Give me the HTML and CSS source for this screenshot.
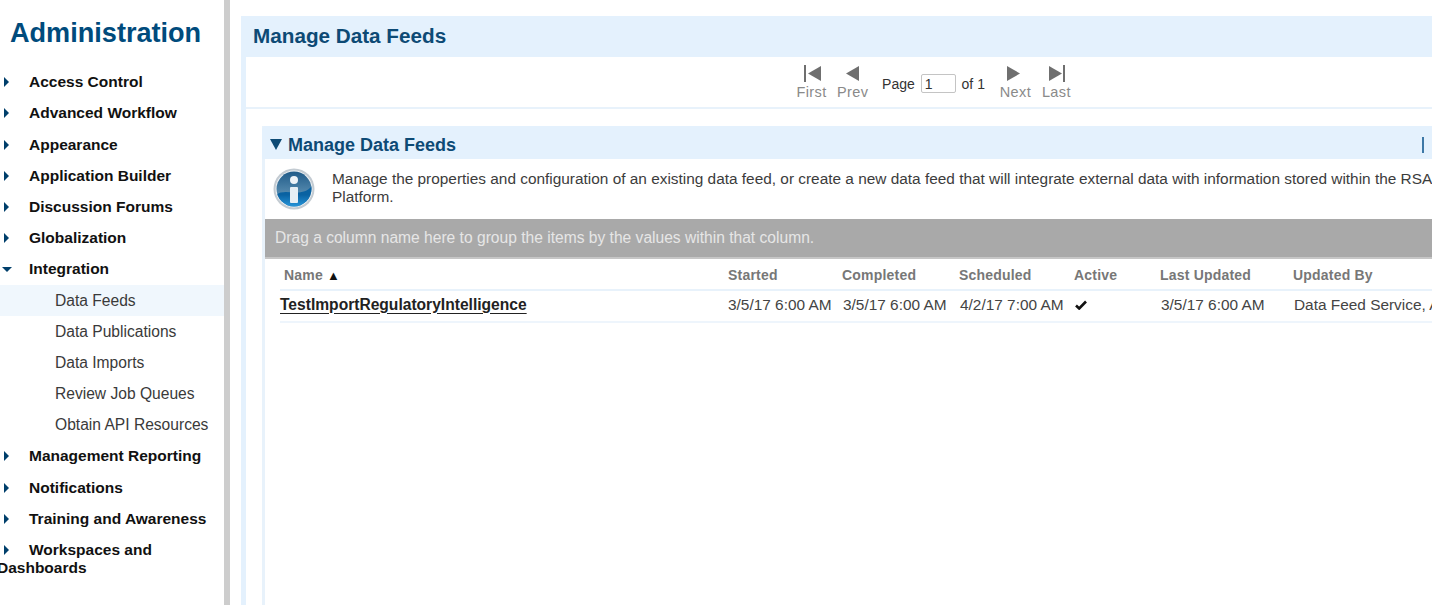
FILE: index.html
```html
<!DOCTYPE html>
<html>
  <head>
    <meta charset="utf-8" />
    <title>Manage Data Feeds</title>
    <link rel="stylesheet" href="styles.css">
  </head>
  <body>
    <div class="sidebar">
      <h1>Administration</h1>
      <ul class="menu">
        <li class="menu-item"><span class="arrow"></span>Access Control</li>
        <li class="menu-item"><span class="arrow"></span>Advanced Workflow</li>
        <li class="menu-item"><span class="arrow"></span>Appearance</li>
        <li class="menu-item"><span class="arrow"></span>Application Builder</li>
        <li class="menu-item"><span class="arrow"></span>Discussion Forums</li>
        <li class="menu-item"><span class="arrow"></span>Globalization</li>
        <li class="menu-item"><span class="arrow open"></span>Integration</li>
        <li class="sub-item selected">Data Feeds</li>
        <li class="sub-item">Data Publications</li>
        <li class="sub-item">Data Imports</li>
        <li class="sub-item">Review Job Queues</li>
        <li class="sub-item">Obtain API Resources</li>
        <li class="menu-item"><span class="arrow"></span>Management Reporting</li>
        <li class="menu-item"><span class="arrow"></span>Notifications</li>
        <li class="menu-item"><span class="arrow"></span>Training and Awareness</li>
        <li class="menu-item"><span class="arrow"></span>Workspaces and Dashboards</li>
      </ul>
    </div>

    <div class="divider"></div>

    <div class="main">
      <div class="page-frame">
        <h2 class="page-title">Manage Data Feeds</h2>
        <div class="page-body">
          <div class="pager">
            <div class="pager-btn">
              <svg class="icon-first" width="18" height="18" viewBox="0 0 18 18"><rect x="0" y="0" width="2" height="17" fill="#6f6f6f"/><path d="M17 1v15L4 8.500z" fill="#6f6f6f"/></svg>
              <span>First</span>
            </div>
            <div class="pager-btn">
              <svg width="13" height="18" viewBox="0 0 13 18"><path d="M13 1v15L0 8.500z" fill="#6f6f6f"/></svg>
              <span>Prev</span>
            </div>
            <div class="pager-page">
              Page <input class="page-input" type="text" value="1" /> of 1
            </div>
            <div class="pager-btn">
              <svg class="icon-next" width="13" height="18" viewBox="0 0 13 18"><path d="M0 1v15l13-7.500z" fill="#6f6f6f"/></svg>
              <span>Next</span>
            </div>
            <div class="pager-btn">
              <svg class="icon-last" width="18" height="18" viewBox="0 0 18 18"><path d="M0 1v15l13-7.500z" fill="#6f6f6f"/><rect x="14" y="0" width="2" height="17" fill="#6f6f6f"/></svg>
              <span>Last</span>
            </div>
          </div>

          <div class="panel">
            <div class="panel-head">
              <span class="panel-title"><span class="caret"></span>Manage Data Feeds</span>
              <span class="panel-tool"></span>
            </div>
            <div class="panel-body">
              <div class="intro">
                <svg class="info-icon" width="42" height="42" viewBox="0 0 42 42">
                  <defs>
                    <linearGradient id="info-top" x1="0" y1="0" x2="0" y2="1">
                      <stop offset="0" stop-color="#1f5a88"/>
                      <stop offset="0.7" stop-color="#5c90b3"/>
                    </linearGradient>
                    <linearGradient id="info-low" x1="0" y1="0" x2="0" y2="1">
                      <stop offset="0.4" stop-color="#0a62a2"/>
                      <stop offset="1" stop-color="#2a9be0"/>
                    </linearGradient>
                    <clipPath id="info-clip">
                      <circle cx="21" cy="21" r="17.500"/>
                    </clipPath>
                  </defs>
                  <circle cx="21" cy="21" r="20.500" fill="#c3cbd2"/>
                  <circle cx="21" cy="21" r="18.500" fill="#eef2f5"/>
                  <g clip-path="url(#info-clip)">
                    <rect x="3" y="3" width="36" height="36" fill="url(#info-top)"/>
                    <path d="M3 27C12 19 28 31 39 18V40H3z" fill="url(#info-low)"/>
                  </g>
                  <circle cx="21" cy="12" r="4" fill="#eef3f7"/>
                  <rect x="17" y="19" width="8" height="16" rx="1" fill="#e6eef4"/>
                </svg>
                <p>Manage the properties and configuration of an existing data feed, or create a new data feed that will integrate external data with information stored within the RSA Archer Platform.</p>
              </div>
              <div class="group-bar">Drag a column name here to group the items by the values within that column.</div>
              <table class="grid">
                <colgroup>
                  <col class="col-name" />
                  <col class="col-started" />
                  <col class="col-completed" />
                  <col class="col-scheduled" />
                  <col class="col-active" />
                  <col class="col-updated" />
                  <col class="col-by" />
                </colgroup>
                <thead>
                  <tr>
                    <th class="name-head">Name <span class="sort">▲</span></th>
                    <th>Started</th>
                    <th>Completed</th>
                    <th>Scheduled</th>
                    <th>Active</th>
                    <th>Last Updated</th>
                    <th>Updated By</th>
                  </tr>
                </thead>
                <tbody>
                  <tr>
                    <td><a class="feed-link" href="#">TestImportRegulatoryIntelligence</a></td>
                    <td>3/5/17 6:00 AM</td>
                    <td>3/5/17 6:00 AM</td>
                    <td>4/2/17 7:00 AM</td>
                    <td>
                      <svg width="12" height="10" viewBox="0 0 12 10"><path d="M1 5.500 4.200 8.500 11 1.500" fill="none" stroke="#111" stroke-width="2.600"/></svg>
                    </td>
                    <td>3/5/17 6:00 AM</td>
                    <td>Data Feed Service, Admin</td>
                  </tr>
                </tbody>
              </table>
            </div>
          </div>
        </div>
      </div>
    </div>
  </body>
</html>
```

FILE: styles.css
```css
html,
body {
  height: 100%;
}
body {
  margin: 0;
  display: flex;
  overflow: hidden;
  background-color: #fff;
  font-family: "Liberation Sans", Arial, sans-serif;
  color: #333;
}
.sidebar {
  flex: 0 0 224px;
  width: 224px;
}
.sidebar h1 {
  margin: 0;
  padding: 14px 0 15.650px 10px;
  height: 37px;
  line-height: 37px;
  font-size: 27.100px;
  font-weight: bold;
  color: #004b7c;
}
.menu {
  margin: 0;
  padding: 0;
  list-style: none;
}
.menu-item {
  margin-left: -3px;
  padding: 6.600px 0;
  line-height: 18px;
  text-indent: 7px;
  font-size: 15.500px;
  font-weight: bold;
  color: #111;
}
.arrow {
  display: inline-block;
  width: 0;
  height: 0;
  margin-right: 20px;
  vertical-align: 0;
  border-top: 5px solid transparent;
  border-bottom: 5px solid transparent;
  border-left: 5px solid #003f6b;
}
.arrow.open {
  margin-left: -2px;
  margin-right: 17px;
  vertical-align: 2px;
  border-left: 5px solid transparent;
  border-right: 5px solid transparent;
  border-top: 5px solid #003f6b;
  border-bottom: 0;
}
.sub-item {
  padding: 6.600px 0 6.600px 55px;
  line-height: 18px;
  font-size: 15.600px;
  color: #3a3a3a;
}
.sub-item.selected {
  background-color: #f0f7fd;
}
.divider {
  flex: 0 0 6px;
  background-color: #cdcdcd;
}
.main {
  flex: 1;
  min-width: 0;
  padding: 16px 0 0 11px;
  overflow: hidden;
}
.page-frame {
  width: 1381px;
  height: 100%;
  box-sizing: border-box;
  background-color: #e4f1fd;
  padding: 0 0 0 5px;
}
.page-title {
  margin: 0 0 0 -5px;
  padding-left: 12px;
  height: 41px;
  line-height: 40px;
  font-size: 20.700px;
  font-weight: bold;
  color: #0d4a75;
}
.page-body {
  height: 100%;
  background-color: #fff;
}
.pager {
  display: flex;
  justify-content: center;
  align-items: flex-start;
  gap: 10px;
  height: 52px;
  box-sizing: border-box;
  padding-top: 8px;
  border-bottom: 2px solid #e8f2fb;
}
.pager-btn {
  display: flex;
  flex-direction: column;
  align-items: center;
  width: 31px;
  font-size: 14.500px;
  letter-spacing: 0.400px;
  color: #8a8a8a;
}
.pager-btn span {
  line-height: 18px;
}
.icon-first {
  margin-left: 2px;
}
.icon-next {
  margin-right: 3px;
}
.icon-last {
  margin-left: 3px;
}
.pager-page {
  margin: 9px 5px 0 4px;
  font-size: 14px;
  color: #333;
}
.page-input {
  width: 28px;
  height: 13px;
  margin: 0 2px;
  padding: 2px 2px 2px 3px;
  border: 1px solid #c4c4c4;
  border-radius: 2px;
  font-family: inherit;
  font-size: 14px;
  color: #333;
}
.panel {
  margin: 17px 0 0 16px;
  border-left: 3px solid #e8f2fb;
  height: 100%;
}
.panel-head {
  display: flex;
  justify-content: space-between;
  align-items: center;
  height: 33px;
  box-sizing: border-box;
  padding: 5px 198px 0 8px;
  background-color: #e4f1fd;
  border-radius: 4px 0 0 0;
  margin-left: -3px;
}
.panel-title {
  font-size: 18px;
  font-weight: bold;
  color: #0d4a75;
}
.caret {
  display: inline-block;
  width: 0;
  height: 0;
  margin-right: 6px;
  vertical-align: 1px;
  border-left: 6px solid transparent;
  border-right: 6px solid transparent;
  border-top: 11px solid #0d4a75;
}
.panel-tool {
  width: 2px;
  height: 16px;
  background-color: #3d78a6;
}
.intro {
  display: flex;
  gap: 17px;
  height: 60px;
  padding: 9px 0 0 8px;
  box-sizing: border-box;
}
.intro p {
  margin: 2px 0 0;
  width: 1180px;
  line-height: 18px;
  font-size: 15.400px;
  color: #3c3c3c;
}
.info-icon {
  flex: none;
}
.group-bar {
  height: 40px;
  line-height: 38px;
  padding-left: 10px;
  box-sizing: border-box;
  background-color: #a9a9a9;
  border-bottom: 2px solid #c6c6c6;
  font-size: 15.600px;
  color: #e6e6e6;
}
.grid {
  margin-left: 15px;
  border-collapse: collapse;
  table-layout: fixed;
  width: 1094px;
  font-size: 15.400px;
}
.col-name {
  width: 448px;
}
.col-started {
  width: 114px;
}
.col-completed {
  width: 117px;
}
.col-scheduled {
  width: 115px;
}
.col-active {
  width: 86px;
}
.col-updated {
  width: 133px;
}
.col-by {
  width: 280px;
}
.grid th {
  height: 28px;
  padding: 2px 0 0 0;
  text-align: left;
  font-size: 14px;
  font-weight: bold;
  letter-spacing: 0.200px;
  color: #777;
  border-bottom: 2px solid #e8f2fb;
  white-space: nowrap;
}
.grid th.name-head {
  padding-left: 4px;
}
.sort {
  font-size: 13px;
  color: #111;
}
.grid td {
  height: 27px;
  padding: 0 0 3px 1px;
  color: #444;
  border-bottom: 2px solid #eef5fc;
  white-space: nowrap;
}
.grid td:first-child,
.grid td:nth-child(2) {
  padding-left: 0;
}
.feed-link {
  font-size: 15.600px;
  font-weight: bold;
  color: #222;
  text-decoration: underline;
  text-underline-offset: 3px;
}
```
